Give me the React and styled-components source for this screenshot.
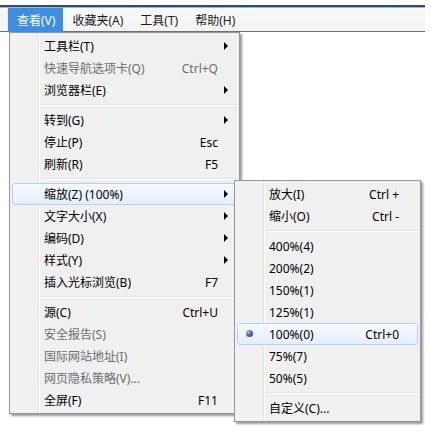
import React from 'react';
import styled, { createGlobalStyle } from 'styled-components';

const GlobalStyle = createGlobalStyle`
  html, body {
    margin: 0;
    padding: 0;
    background: #fff;
  }
  body {
    font-family: "Noto Sans", "Noto Sans CJK SC", sans-serif;
    font-size: 12px;
  }
`;

const Page = styled.div`
  position: relative;
  width: 431px;
  height: 431px;
  padding-top: 5px;
  box-sizing: border-box;
`;

const TitleLine = styled.div`
  width: 425px;
  height: 2px;
  background: #2e4d7b;
  border-bottom: 1px solid #9fb3cc;
`;

const MenuBar = styled.div`
  display: flex;
  width: 425px;
  height: 24px;
  padding-left: 8px;
  box-sizing: border-box;
  background: linear-gradient(#f8f9fb, #f3f3f3);
  border-bottom: 1px solid #6f6f6f;
`;

const BarItem = styled.div`
  display: flex;
  align-items: center;
  padding: 0 8px 0 9px;
  height: 24px;
  color: ${({ $active }) => ($active ? '#fff' : '#1a1a1a')};
  background: ${({ $active }) => ($active ? '#3d8ee0' : 'transparent')};
  white-space: nowrap;
`;

const Menu = styled.div`
  position: absolute;
  left: ${({ $x }) => $x}px;
  top: ${({ $y }) => $y}px;
  width: ${({ $w }) => $w}px;
  box-sizing: border-box;
  padding: 2px 0;
  border: 1px solid #979797;
  background: linear-gradient(
    to right,
    #f1f1f1 0 28px,
    #e2e3e3 28px 29px,
    #ffffff 29px 30px,
    #f0f0f0 30px
  );
  box-shadow: 2px 2px 2px rgba(0, 0, 0, 0.4);
`;

const Row = styled.div`
  position: relative;
  display: flex;
  align-items: center;
  height: 22px;
  margin: 0 2px;
  padding-left: 32px;
  box-sizing: border-box;
  color: ${({ $disabled }) => ($disabled ? '#6d6d6d' : '#000')};
  border: 1px solid ${({ $hot }) => ($hot ? '#b4d1f3' : 'transparent')};
  border-radius: 3px;
  background: ${({ $hot }) =>
    $hot ? 'linear-gradient(#f6f9fe, #e4eefb)' : 'transparent'};
  white-space: nowrap;
`;

const Label = styled.span`
  flex: 1;
  margin-left: -1px;
`;

const Shortcut = styled.span`
  text-align: right;
`;

const ArrowCell = styled.span`
  display: flex;
  align-items: center;
  width: 18px;
  height: 100%;
  padding-left: 6px;
  box-sizing: border-box;
`;

const Arrow = styled.span`
  width: 0;
  height: 0;
  border-top: 4px solid transparent;
  border-bottom: 4px solid transparent;
  border-left: 4px solid #000;
`;

const Bullet = styled.span`
  position: absolute;
  left: 8px;
  top: 6px;
  width: 7px;
  height: 7px;
  border-radius: 50%;
  background: radial-gradient(circle at 35% 30%, #b7bfe6 0, #5a66ad 45%, #232d6e 100%);
`;

const Separator = styled.div`
  height: 8px;
  margin-left: 30px;
  margin-right: 2px;
  display: flex;
  flex-direction: column;
  justify-content: center;

  &::before {
    content: '';
    height: 1px;
    background: #e2e3e3;
  }
  &::after {
    content: '';
    height: 1px;
    background: #fff;
  }
`;

const viewMenu = [
  { label: '工具栏(T)', arrow: true },
  { label: '快速导航选项卡(Q)', key: 'Ctrl+Q', disabled: true },
  { label: '浏览器栏(E)', arrow: true },
  'sep',
  { label: '转到(G)', arrow: true },
  { label: '停止(P)', key: 'Esc' },
  { label: '刷新(R)', key: 'F5' },
  'sep',
  { label: '缩放(Z) (100%)', arrow: true, hot: true },
  { label: '文字大小(X)', arrow: true },
  { label: '编码(D)', arrow: true },
  { label: '样式(Y)', arrow: true },
  { label: '插入光标浏览(B)', key: 'F7' },
  'sep',
  { label: '源(C)', key: 'Ctrl+U' },
  { label: '安全报告(S)', disabled: true },
  { label: '国际网站地址(I)', disabled: true },
  { label: '网页隐私策略(V)...', disabled: true },
  { label: '全屏(F)', key: 'F11' },
];

const zoomMenu = [
  { label: '放大(I)', key: 'Ctrl +' },
  { label: '缩小(O)', key: 'Ctrl -' },
  'sep',
  { label: '400%(4)' },
  { label: '200%(2)' },
  { label: '150%(1)' },
  { label: '125%(1)' },
  { label: '100%(0)', key: 'Ctrl+0', checked: true, hot: true },
  { label: '75%(7)' },
  { label: '50%(5)' },
  'sep',
  { label: '自定义(C)...' },
];

const MenuList = ({ items, x, y, w }) => (
  <Menu $x={x} $y={y} $w={w}>
    {items.map((it, i) =>
      it === 'sep' ? (
        <Separator key={i} />
      ) : (
        <Row key={i} $disabled={it.disabled} $hot={it.hot}>
          {it.checked && <Bullet />}
          <Label>{it.label}</Label>
          {it.key && <Shortcut>{it.key}</Shortcut>}
          <ArrowCell>{it.arrow && <Arrow />}</ArrowCell>
        </Row>
      )
    )}
  </Menu>
);

export default function App() {
  return (
    <Page>
      <GlobalStyle />
      <TitleLine />
      <MenuBar>
        <BarItem $active>查看(V)</BarItem>
        <BarItem>收藏夹(A)</BarItem>
        <BarItem>工具(T)</BarItem>
        <BarItem>帮助(H)</BarItem>
      </MenuBar>
      <MenuList items={viewMenu} x={9} y={32} w={231} />
      <MenuList items={zoomMenu} x={234} y={180} w={187} />
    </Page>
  );
}
